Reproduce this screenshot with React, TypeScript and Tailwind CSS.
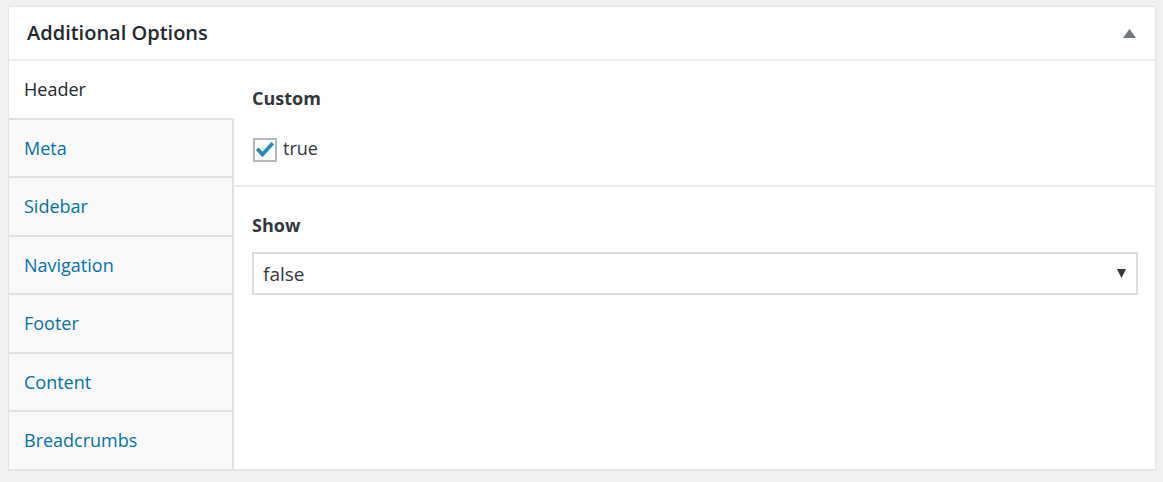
import React from "react";

const tabs = [
  { label: "Meta", h: "h-[58px]" },
  { label: "Sidebar", h: "h-[59px]" },
  { label: "Navigation", h: "h-[58px]" },
  { label: "Footer", h: "h-[59px]" },
  { label: "Content", h: "h-[58px]" },
  { label: "Breadcrumbs", h: "h-[59px]" },
];

export default function App() {
  return (
    <div
      className="w-[1163px] h-[482px] bg-[#f1f1f1] pt-[6px] pl-[8px] pr-[7px]"
      style={{ fontFamily: '"Open Sans", "Noto Sans", sans-serif' }}
    >
      <div className="w-[1148px] h-[464px] bg-white border border-[#e5e5e5] shadow-[0_1px_1px_rgba(0,0,0,0.04)] flex flex-col">
        <div className="h-[54px] shrink-0 border-b-2 border-[#eeeeee] flex items-center justify-between pl-[18px] pr-[19px]">
          <h2 className="text-[20px] font-semibold text-[#23282d] leading-none">Additional Options</h2>
          <svg width="13" height="9" viewBox="0 0 13 9" className="mt-[1px]">
            <polygon points="6.5,0 13,9 0,9" fill="#72777c" />
          </svg>
        </div>
        <div className="flex flex-1 min-h-0">
          <div className="w-[225px] shrink-0 flex flex-col">
            <div className="h-[57px] bg-white flex items-center pl-[15px] pr-[2px]">
              <span className="text-[18px] text-[#23282d]">Header</span>
            </div>
            {tabs.map((t) => (
              <div
                key={t.label}
                className={`${t.h} bg-[#f9f9f9] border-t-2 border-r-2 border-[#e1e1e1] flex items-center pl-[15px]`}
              >
                <span className="text-[18px] text-[#0073aa]">{t.label}</span>
              </div>
            ))}
          </div>
          <div className="flex-1 flex flex-col">
            <div className="h-[126px] border-b-2 border-[#eeeeee] pl-[18px] pt-[24px]">
              <div className="text-[18px] font-bold text-[#32373c] leading-[26px]">Custom</div>
              <label className="mt-[26px] ml-[1px] flex items-center gap-[6px]">
                <span className="w-[24px] h-[24px] border-2 border-[#b4b9be] bg-white flex items-center justify-center">
                  <svg width="18" height="16" viewBox="0 0 18 16">
                    <path d="M2.5 8 L6.5 12.5 L15.5 2.5" fill="none" stroke="#1e8cbe" strokeWidth="3.6" strokeLinecap="square" />
                  </svg>
                </span>
                <span className="text-[18px] text-[#32373c] -mt-[2px]">true</span>
              </label>
            </div>
            <div className="pl-[18px] pr-[17px] pt-[25px]">
              <div className="text-[18px] font-bold text-[#32373c] leading-[26px]">Show</div>
              <div className="mt-[14px] h-[43px] border-2 border-[#dddddd] bg-white flex items-center justify-between pl-[9px] pr-[10px]">
                <span className="text-[19px] text-[#32373c] mt-[2px]">false</span>
                <svg width="9" height="9" viewBox="0 0 9 9">
                  <polygon points="0,0 9,0 4.5,9" fill="#32373c" />
                </svg>
              </div>
            </div>
          </div>
        </div>
      </div>
    </div>
  );
}
